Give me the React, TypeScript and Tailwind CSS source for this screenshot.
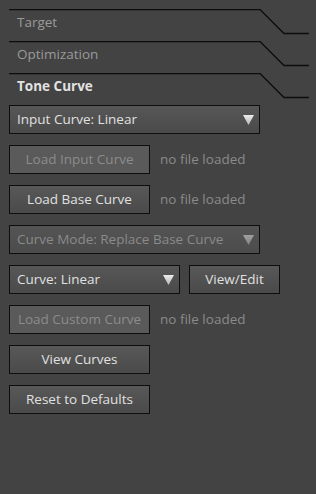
import React from "react";

const font = { fontFamily: '"Open Sans", "Noto Sans", sans-serif' };

function TabHeader({ label, active }: { label: string; active?: boolean }) {
  return (
    <div className="relative h-[32px]">
      <svg className="absolute left-0 top-0" width="316" height="32" viewBox="0 0 316 32">
        <polyline points="9,0.5 260,0.5 284,24.5 309,24.5" fill="none" stroke="#0d0d0d" strokeWidth="1.3" />
      </svg>
      <div
        className={
          "pl-[17px] pt-[4px] text-[13.5px] leading-[18px] " +
          (active ? "font-bold text-[#e2e2e2]" : "text-[#9a9a9a]")
        }
      >
        {label}
      </div>
    </div>
  );
}

function Arrow() {
  return (
    <svg width="11" height="10" viewBox="0 0 11 10">
      <defs>
        <linearGradient id="ag" x1="0" y1="0" x2="0" y2="1">
          <stop offset="0" stopColor="#ececec" />
          <stop offset="1" stopColor="#b8b8b8" />
        </linearGradient>
      </defs>
      <polygon points="0,0 11,0 5.5,10" fill="url(#ag)" />
    </svg>
  );
}

function Select({ label, width, disabled }: { label: string; width: string; disabled?: boolean }) {
  return (
    <div
      className={
        width +
        " h-[29px] border border-[#0e0e0e] flex items-center justify-between pl-[7px] pr-[5px] text-[13.5px] " +
        (disabled
          ? "bg-gradient-to-b from-[#545454] to-[#4c4c4c] text-[#8a8a8a]"
          : "bg-gradient-to-b from-[#575757] to-[#4a4a4a] text-[#e0e0e0]")
      }
    >
      <span className="whitespace-nowrap">{label}</span>
      <span className={disabled ? "opacity-50" : ""}>
        <Arrow />
      </span>
    </div>
  );
}

function Button({ label, width, disabled }: { label: string; width: string; disabled?: boolean }) {
  return (
    <div
      className={
        width +
        " h-[29px] border border-[#0e0e0e] flex items-center justify-center text-[13.5px] whitespace-nowrap " +
        (disabled
          ? "bg-[#5a5a5a] text-[#8c8c8c]"
          : "bg-gradient-to-b from-[#585858] to-[#4a4a4a] text-[#e0e0e0]")
      }
    >
      {label}
    </div>
  );
}

function Note() {
  return <span className="text-[13.5px] text-[#8a8a8a] whitespace-nowrap">no file loaded</span>;
}

export default function App() {
  return (
    <div className="w-[316px] h-[494px] bg-[#434343] overflow-hidden" style={font}>
      <div className="h-[9px]" />
      <TabHeader label="Target" />
      <TabHeader label="Optimization" />
      <TabHeader label="Tone Curve" active />
      <div className="pl-[9px] pt-[0px] flex flex-col gap-[11px]">
        <Select label="Input Curve: Linear" width="w-[251px]" />
        <div className="flex items-center gap-[10px]">
          <Button label="Load Input Curve" width="w-[141px]" disabled />
          <Note />
        </div>
        <div className="flex items-center gap-[10px]">
          <Button label="Load Base Curve" width="w-[141px]" />
          <Note />
        </div>
        <Select label="Curve Mode: Replace Base Curve" width="w-[251px]" disabled />
        <div className="flex items-center gap-[9px]">
          <Select label="Curve: Linear" width="w-[171px]" />
          <Button label="View/Edit" width="w-[91px]" />
        </div>
        <div className="flex items-center gap-[10px]">
          <Button label="Load Custom Curve" width="w-[141px]" disabled />
          <Note />
        </div>
        <Button label="View Curves" width="w-[141px]" />
        <Button label="Reset to Defaults" width="w-[141px]" />
      </div>
    </div>
  );
}
